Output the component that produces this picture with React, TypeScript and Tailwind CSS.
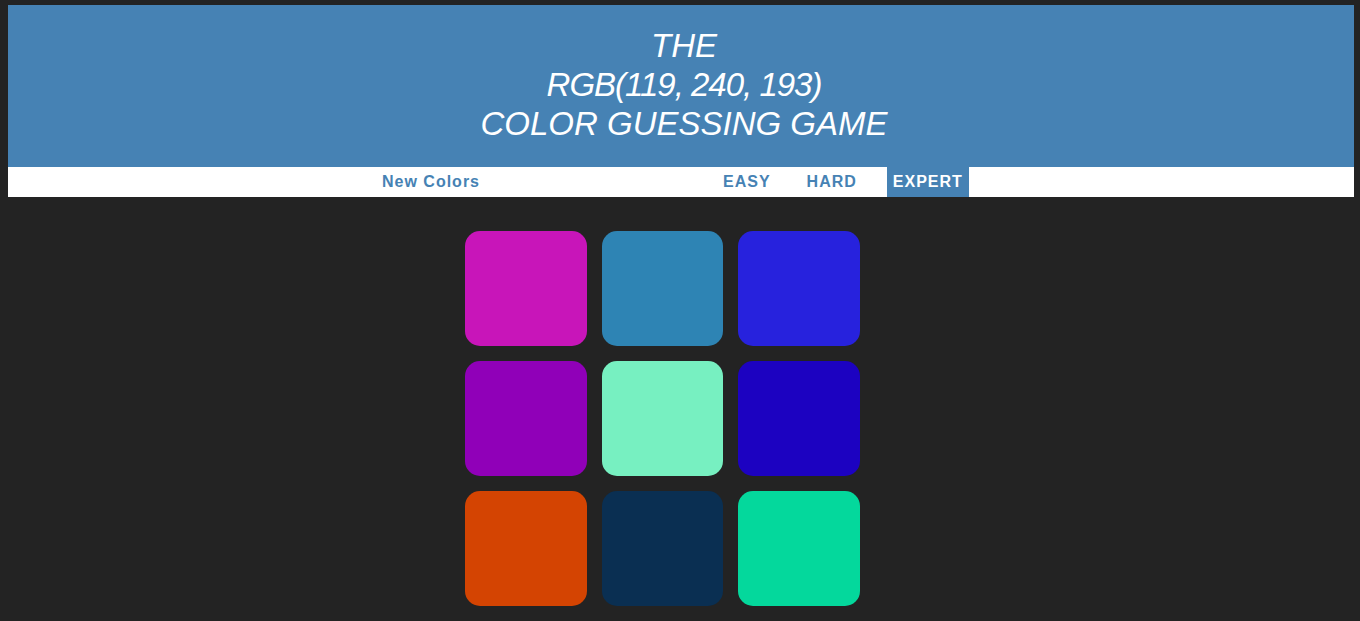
const squares = [
  '#c815b9',
  '#2e84b4',
  '#2722dd',
  '#9000b8',
  '#77f0c1',
  '#1c02c1',
  '#d44402',
  '#0a2f52',
  '#04d89c',
];

const App = () => {
  return (
    <div className="min-h-[621px] bg-[#232323] pt-[5px] font-['Liberation_Sans',Arial,sans-serif]">
      <div className="ml-[8px] w-[1346px]">
        <h1 className="bg-[#4682b4] pt-[21px] pb-[24px] pl-[6px] text-center text-[33px] leading-[39px] font-normal italic text-white">
          THE
          <br />
          <span className="tracking-[-1px]">RGB(119, 240, 193)</span>
          <br />
          COLOR GUESSING GAME
        </h1>
        <div className="flex h-[30px] items-stretch bg-white text-[16px] font-bold tracking-[1px] text-[#4682b4]">
          <button className="ml-[367px] px-[7px]">New Colors</button>
          <button className="ml-[229px] px-[7px]">EASY</button>
          <button className="ml-[22px] px-[7px]">HARD</button>
          <button className="ml-[23px] bg-[#4682b4] px-[6px] text-white">EXPERT</button>
        </div>
      </div>
      <div className="ml-[465px] mt-[34px] grid w-[395px] grid-cols-[122px_121px_122px] gap-x-[15px] gap-y-[15px]">
        {squares.map((c, i) => (
          <div key={i} className="h-[115px] rounded-[15px]" style={{ backgroundColor: c }} />
        ))}
      </div>
    </div>
  );
};

export default App;
